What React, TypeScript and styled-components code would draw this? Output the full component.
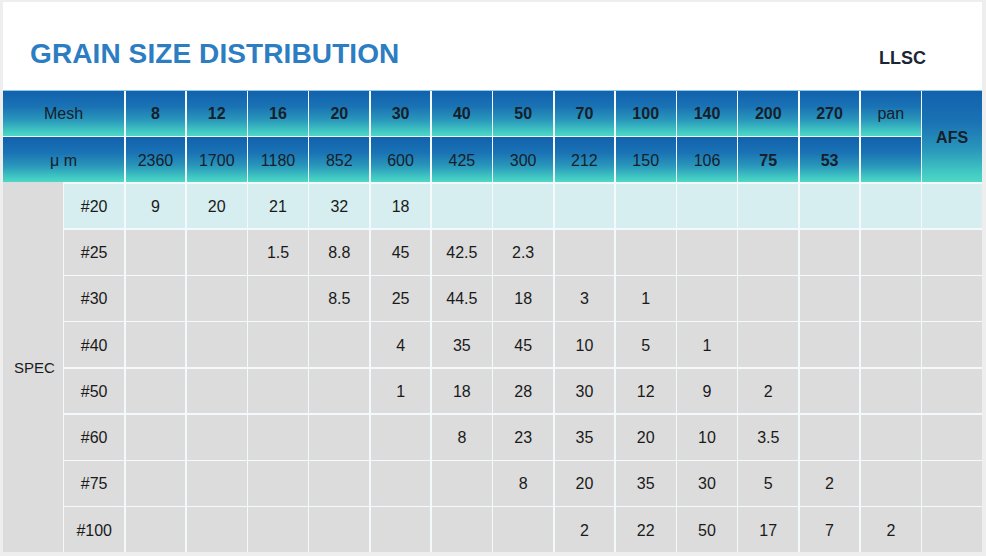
import React from "react";
import styled, { createGlobalStyle, css } from "styled-components";

const Global = createGlobalStyle`
  html, body { margin: 0; padding: 0; background: #eeeeee; }
  body { font-family: "Liberation Sans", Arial, sans-serif; }
`;

const Page = styled.div`
  width: 986px;
  height: 556px;
  padding: 2px 4px 4px 3px;
  box-sizing: border-box;
  background: #eeeeee;
`;

const Card = styled.div`
  width: 979px;
  height: 550px;
  background: #ffffff;
  display: flex;
  flex-direction: column;
  overflow: hidden;
`;

const TitleBar = styled.div`
  height: 88px;
  display: flex;
  align-items: flex-end;
  justify-content: space-between;
  padding: 0 56px 22px 27px;
  box-sizing: border-box;
`;

const Title = styled.h1`
  margin: 0;
  font-family: "Liberation Sans", Arial, sans-serif;
  font-size: 28px;
  font-weight: 700;
  color: #2c7dc1;
  line-height: 1;
  letter-spacing: 0.1px;
`;

const Brand = styled.div`
  font-family: "Liberation Sans", Arial, sans-serif;
  font-size: 18px;
  font-weight: 700;
  color: #1b2634;
  line-height: 1;
  padding-bottom: 1px;
`;

const Grid = styled.div`
  flex: 1;
  display: grid;
  grid-template-columns: repeat(16, 1fr);
  grid-template-rows: repeat(10, 1fr);
  gap: 1.5px;
  background: #f4fafb;
  border-top: 1px solid #8fcbe6;
`;

const headGradient = css`
  background: linear-gradient(
    180deg,
    #1261ad 0%,
    #1a73b4 35%,
    #2a98bb 65%,
    #3fc6c2 88%,
    #4fd8c6 100%
  );
`;

const HeadCell = styled.div<{ $bold?: boolean; $span?: number; $rows?: number }>`
  ${headGradient}
  display: flex;
  align-items: center;
  justify-content: center;
  padding-top: 2px;
  box-sizing: border-box;
  font-size: 16px;
  color: #15202b;
  font-weight: ${(p) => (p.$bold ? 700 : 400)};
  grid-column: span ${(p) => p.$span ?? 1};
  grid-row: span ${(p) => p.$rows ?? 1};
`;

const SpecCell = styled.div`
  grid-column: 1;
  grid-row: 3 / span 8;
  background: #dcdcdc;
  display: flex;
  align-items: center;
  padding-left: 11px;
  font-size: 15px;
  color: #1a1a1a;
  margin-top: -1.5px;
`;

const DataCell = styled.div<{ $hl?: boolean }>`
  background: ${(p) => (p.$hl ? "#d6eef0" : "#dcdcdc")};
  display: flex;
  align-items: center;
  justify-content: center;
  padding-top: 2px;
  box-sizing: border-box;
  font-size: 16px;
  color: #1a1a1a;
`;

const mesh = ["8", "12", "16", "20", "30", "40", "50", "70", "100", "140", "200", "270", "pan"];
const microns: { v: string; b?: boolean }[] = [
  { v: "2360" }, { v: "1700" }, { v: "1180" }, { v: "852" }, { v: "600" }, { v: "425" },
  { v: "300" }, { v: "212" }, { v: "150" }, { v: "106" }, { v: "75", b: true }, { v: "53", b: true }, { v: "" },
];

const rows: { label: string; vals: string[] }[] = [
  { label: "#20", vals: ["9", "20", "21", "32", "18", "", "", "", "", "", "", "", "", ""] },
  { label: "#25", vals: ["", "", "1.5", "8.8", "45", "42.5", "2.3", "", "", "", "", "", "", ""] },
  { label: "#30", vals: ["", "", "", "8.5", "25", "44.5", "18", "3", "1", "", "", "", "", ""] },
  { label: "#40", vals: ["", "", "", "", "4", "35", "45", "10", "5", "1", "", "", "", ""] },
  { label: "#50", vals: ["", "", "", "", "1", "18", "28", "30", "12", "9", "2", "", "", ""] },
  { label: "#60", vals: ["", "", "", "", "", "8", "23", "35", "20", "10", "3.5", "", "", ""] },
  { label: "#75", vals: ["", "", "", "", "", "", "8", "20", "35", "30", "5", "2", "", ""] },
  { label: "#100", vals: ["", "", "", "", "", "", "", "2", "22", "50", "17", "7", "2", ""] },
];

export default function App() {
  return (
    <>
      <Global />
      <Page>
        <Card>
          <TitleBar>
            <Title>GRAIN SIZE DISTRIBUTION</Title>
            <Brand>LLSC</Brand>
          </TitleBar>
          <Grid>
            <HeadCell $span={2}>Mesh</HeadCell>
            {mesh.map((m) => (
              <HeadCell key={"m" + m} $bold={m !== "pan"}>
                {m}
              </HeadCell>
            ))}
            <HeadCell $rows={2} $bold>
              AFS
            </HeadCell>
            <HeadCell $span={2}>μ m</HeadCell>
            {microns.map((m, i) => (
              <HeadCell key={"u" + i} $bold={m.b}>
                {m.v}
              </HeadCell>
            ))}
            <SpecCell>SPEC</SpecCell>
            {rows.map((r, ri) => (
              <React.Fragment key={r.label}>
                <DataCell $hl={ri === 0}>{r.label}</DataCell>
                {r.vals.map((v, vi) => (
                  <DataCell key={vi} $hl={ri === 0}>
                    {v}
                  </DataCell>
                ))}
              </React.Fragment>
            ))}
          </Grid>
        </Card>
      </Page>
    </>
  );
}
